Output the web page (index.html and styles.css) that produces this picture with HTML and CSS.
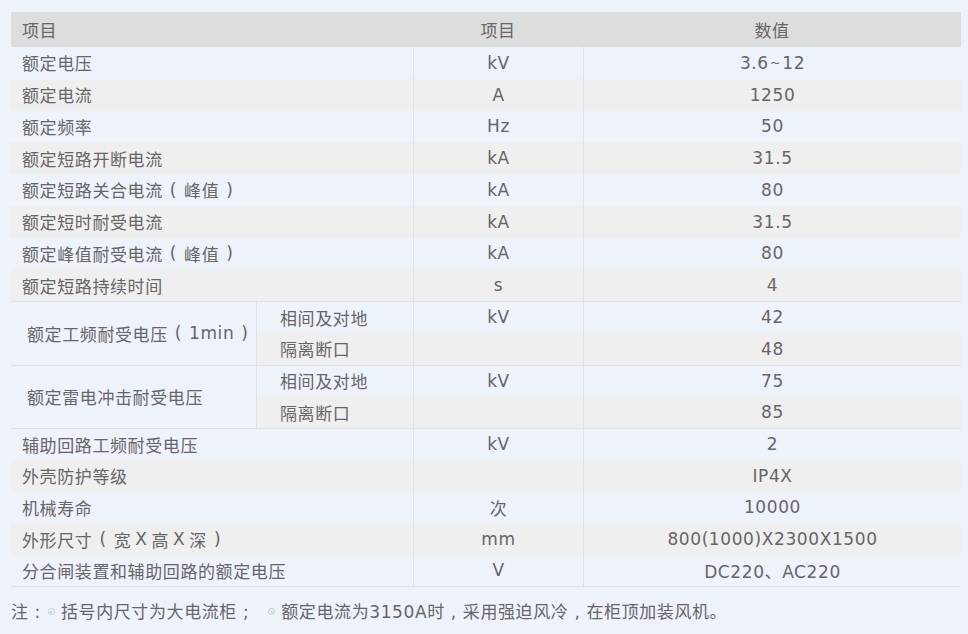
FILE: index.html
```html
<!DOCTYPE html>
<html lang="zh-CN">
<head>
<meta charset="utf-8">
<title>技术参数</title>
<link rel="stylesheet" href="styles.css">
</head>
<body>
<div class="page">
  <div class="spec">
    <div class="hd name">项目</div>
    <div class="hd unit">项目</div>
    <div class="hd val">数值</div>

    <div class="c name">额定电压</div><div class="c unit">kV</div><div class="c val">3.6<span class="tilde">~</span>12</div>
    <div class="c name g">额定电流</div><div class="c unit g">A</div><div class="c val g">1250</div>
    <div class="c name">额定频率</div><div class="c unit">Hz</div><div class="c val">50</div>
    <div class="c name g">额定短路开断电流</div><div class="c unit g">kA</div><div class="c val g">31.5</div>
    <div class="c name">额定短路关合电流<span class="p">(</span>峰值<span class="p">)</span></div><div class="c unit">kA</div><div class="c val">80</div>
    <div class="c name g">额定短时耐受电流</div><div class="c unit g">kA</div><div class="c val g">31.5</div>
    <div class="c name">额定峰值耐受电流<span class="p">(</span>峰值<span class="p">)</span></div><div class="c unit">kA</div><div class="c val">80</div>
    <div class="c name g">额定短路持续时间</div><div class="c unit g">s</div><div class="c val g">4</div>

    <div class="c merged top">额定工频耐受电压<span class="p">(</span>1min<span class="p">)</span></div>
    <div class="c sub top">相间及对地</div><div class="c unit top">kV</div><div class="c val top">42</div>
    <div class="c sub g">隔离断口</div><div class="c unit g"></div><div class="c val g">48</div>

    <div class="c merged top">额定雷电冲击耐受电压</div>
    <div class="c sub top">相间及对地</div><div class="c unit top">kV</div><div class="c val top">75</div>
    <div class="c sub g">隔离断口</div><div class="c unit g"></div><div class="c val g">85</div>

    <div class="c name top">辅助回路工频耐受电压</div><div class="c unit top">kV</div><div class="c val top">2</div>
    <div class="c name g">外壳防护等级</div><div class="c unit g"></div><div class="c val g">IP4X</div>
    <div class="c name">机械寿命</div><div class="c unit">次</div><div class="c val">10000</div>
    <div class="c name g">外形尺寸<span class="p">(</span>宽<span class="x">X</span>高<span class="x">X</span>深<span class="p">)</span></div><div class="c unit g">mm</div><div class="c val g">800(1000)X2300X1500</div>
    <div class="c name last">分合闸装置和辅助回路的额定电压</div><div class="c unit last">V</div><div class="c val last">DC220、AC220</div>
  </div>
  <p class="note">注<span class="p">:</span><span class="dot"></span>括号内尺寸为大电流柜<span class="p semi">;</span><span class="dot"></span>额定电流为3150A时<span class="p">,</span>采用强迫风冷<span class="p">,</span>在柜顶加装风机。</p>
</div>
</body>
</html>
```
FILE: styles.css
```css
html, body {
  margin: 0;
  padding: 0;
  background: #eef3fa;
}
body {
  font-family: "DejaVu Sans", "Noto Sans CJK SC", sans-serif;
  font-size: 17px;
  color: #666;
  letter-spacing: 0.6px;
}
.page {
  width: 968px;
  height: 634px;
  overflow: hidden;
  padding: 12px 0 0 11px;
  box-sizing: border-box;
}
.spec {
  width: 950px;
  display: grid;
  grid-template-columns: 245px 157px 170px 378px;
  grid-template-rows: 35px repeat(17, 31.75px);
}
.hd {
  background: #dcdddd;
  display: flex;
  align-items: center;
}
.hd.name { grid-column: 1 / 3; padding-left: 11px; }
.hd.unit, .hd.val { justify-content: center; }
.c {
  display: flex;
  align-items: center;
  box-sizing: border-box;
  white-space: nowrap;
}
.c.g { background: #efefef; }
.c.name { grid-column: 1 / 3; padding-left: 11px; }
.c.merged {
  grid-column: 1;
  grid-row: span 2;
  padding-left: 16px;
}
.c.sub {
  grid-column: 2;
  padding-left: 23px;
  border-left: 1px solid #dfe2e6;
}
.c.unit {
  justify-content: center;
  border-left: 1px solid #dfe2e6;
}
.c.val {
  justify-content: center;
  border-left: 1px solid #dfe2e6;
}
.c.top { border-top: 1px solid #dfe2e6; }
.c.last { border-bottom: 1px solid #dfe2e6; }
.p {
  display: inline-block;
  padding: 0 7px;
}
.x {
  display: inline-block;
  padding: 0 4px;
}
.tilde {
  display: inline-block;
  font-size: 13px;
  padding: 0 1px;
}
.note {
  margin: 15px 0 0 0;
  line-height: 20px;
  display: flex;
  align-items: center;
  white-space: nowrap;
}
.note .p { padding: 0 6px; }
.note .semi { padding: 0 18px 0 6px; }
.dot {
  display: inline-block;
  width: 7px;
  height: 7px;
  border: 1px solid #c8cace;
  border-radius: 50%;
  box-sizing: border-box;
  margin: 0 6px 0 1px;
  position: relative;
}
.dot::after {
  content: "";
  position: absolute;
  left: 1.5px;
  top: 1.5px;
  width: 2px;
  height: 2px;
  border-radius: 50%;
  background: #c8cace;
}
```
